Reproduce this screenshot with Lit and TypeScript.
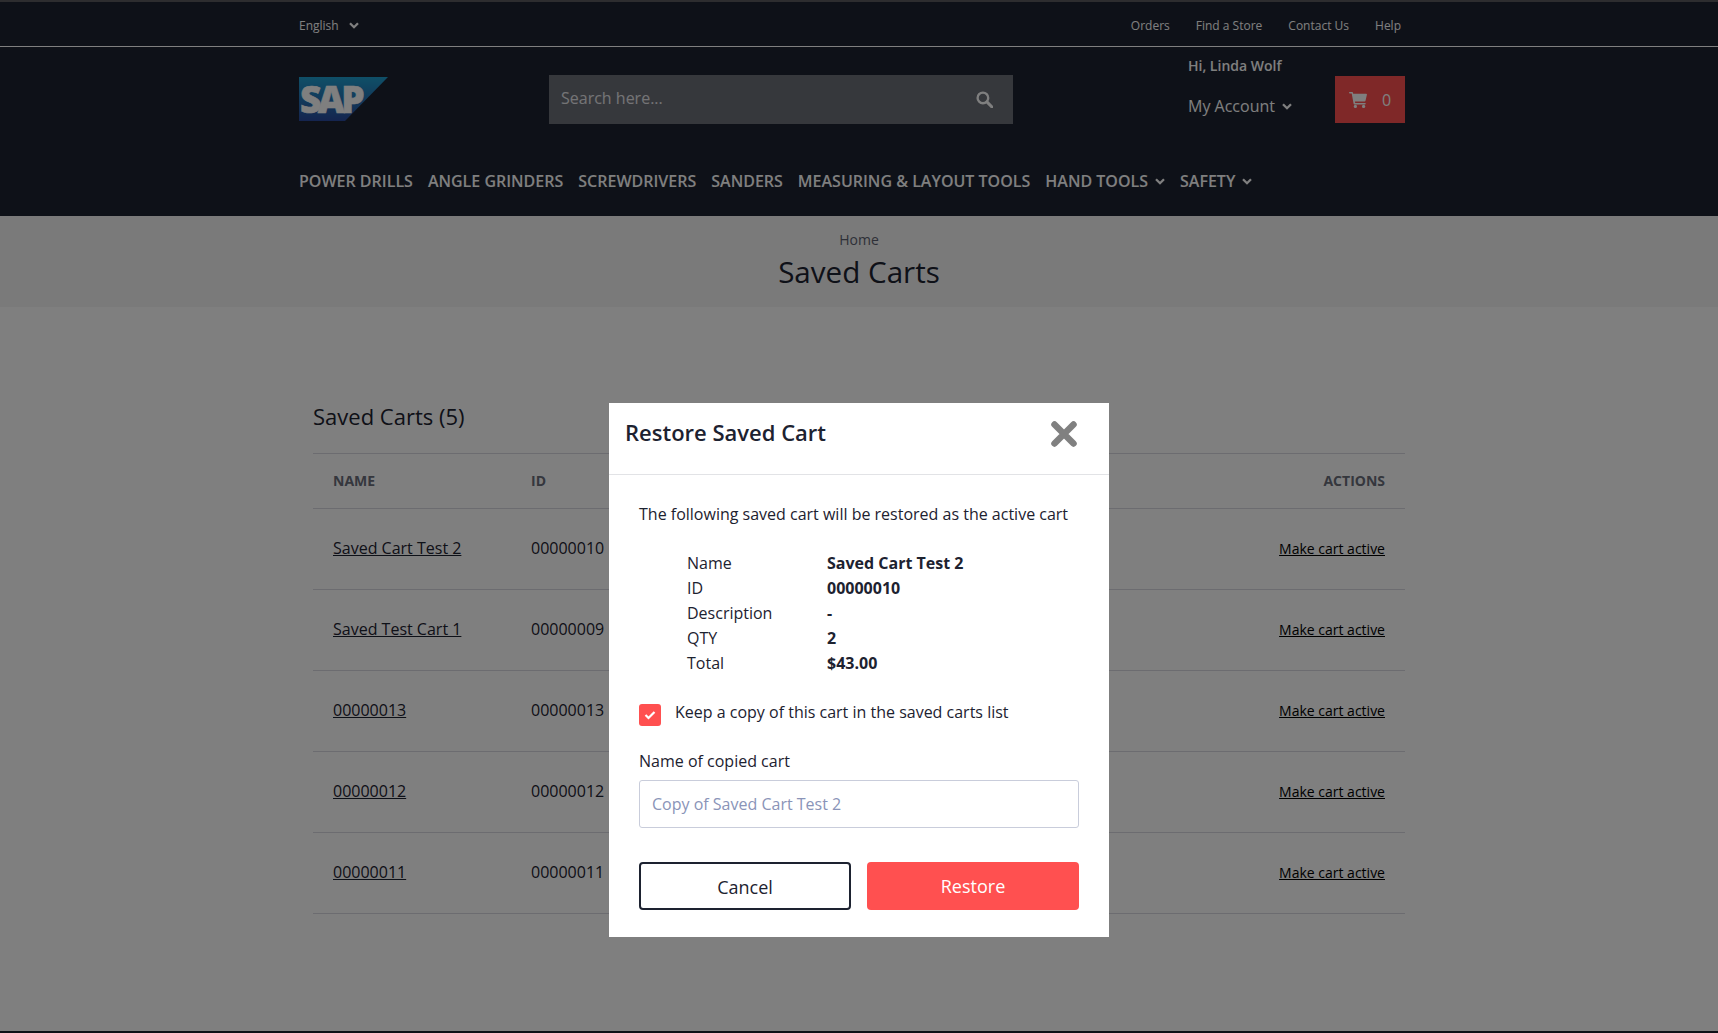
import { LitElement, html, css } from "lit";
import { customElement } from "lit/decorators.js";

const chevron = html`<svg class="chev" viewBox="0 0 10 7" aria-hidden="true"><path d="M1 1.2 5 5.2l4-4" fill="none" stroke="currentColor" stroke-width="2.3"/></svg>`;

const rows = [
  ["Saved Cart Test 2", "00000010"],
  ["Saved Test Cart 1", "00000009"],
  ["00000013", "00000013"],
  ["00000012", "00000012"],
  ["00000011", "00000011"],
];
const details = [
  ["Name", "Saved Cart Test 2"],
  ["ID", "00000010"],
  ["Description", "-"],
  ["QTY", "2"],
  ["Total", "$43.00"],
];

@customElement("app-root")
export class AppRoot extends LitElement {
  static styles = css`
    :host { display: flex; flex-direction: column; height: 1033px; overflow: hidden; position: relative; background: #fff; font-family: "Open Sans", sans-serif; color: #1d2230; }
    * { box-sizing: border-box; }
    .wrap { width: 1140px; margin: 0 auto; padding: 0 15px; }
    header { background: #1c2230; color: #fff; height: 216px; flex: none; padding-right: 10px; border-top: 2px solid #5a5a5e; }
    .top { height: 45px; margin-right: -10px; border-bottom: 1px solid #fff; padding-right: 10px; }
    .top .wrap { display: flex; justify-content: space-between; align-items: center; height: 44px; font-size: 12px; padding-top: 3px; padding-right: 23px; }
    .lang { display: flex; align-items: center; gap: 10px; }
    .links { display: flex; gap: 26px; }
    .chev { width: 10px; height: 7px; }
    .main { display: flex; height: 107px; position: relative; }
    .logo { width: 90px; height: 44px; margin-top: 30px; margin-right: 160px; flex: none; overflow: visible; }
    .search { width: 464px; height: 49px; margin-top: 28px; background: #6d7079; display: flex; align-items: center; justify-content: space-between; padding: 0 12px 3px; font-size: 16px; color: #e9e9ec; flex: none; }
    .search svg { width: 17px; height: 17px; margin: 2px 8px 0 0; }
    .acct { margin-left: 175px; width: 147px; flex: none; }
    .hi { font-size: 14px; font-weight: 600; margin-top: 9px; line-height: 20px; }
    .my { font-size: 16px; margin-top: 19px; display: flex; align-items: center; gap: 7px; line-height: 22px; }
    .cart { margin-top: 29px; width: 70px; height: 47px; background: #ff5050; display: flex; align-items: center; justify-content: center; gap: 15px; font-size: 16px; flex: none; }
    .cart svg { width: 18px; height: 16px; }
    nav { display: flex; gap: 15px; font-size: 16px; font-weight: 600; padding-top: 16px; line-height: 22px; }
    nav span { display: flex; align-items: center; gap: 7px; }
    .crumb { height: 91px; background: #f4f4f4; text-align: center; flex: none; }
    .crumb .home { font-size: 14px; padding-top: 14px; line-height: 19px; color: #5d6170; }
    .crumb h1 { font-size: 29.6px; font-weight: 400; margin: 4px 0 0; line-height: 38px; }
    .content { padding-right: 10px; flex: none; }
    .inner { margin: 0 4px 0 14px; }
    h2 { font-size: 22px; font-weight: 400; margin: 0; padding-top: 94px; line-height: 30px; height: 147px; border-bottom: 1px solid #d8d8e0; }
    .row { display: flex; align-items: center; border-bottom: 1px solid #d8d8e0; padding: 0 20px 2px; height: 81px; font-size: 16px; }
    .head { height: 55px; font-size: 14px; font-weight: 700; color: #6a6e7b; padding-bottom: 1px; }
    .name { width: 198px; flex: none; }
    .id { flex: 1; }
    .act { font-size: 14px; color: #000; text-decoration: underline; }
    .name a { text-decoration: underline; }
    .head .act { text-decoration: none; color: #6a6e7b; }
    .foot { margin-top: auto; height: 2px; background: #1c2230; flex: none; }
    .overlay { position: absolute; inset: 0; background: rgba(0,0,0,.5); display: flex; justify-content: center; padding-top: 403px; }
    .modal { width: 500px; height: 534px; background: #fff; }
    .mhead { height: 72px; border-bottom: 1px solid #e2e3e6; display: flex; justify-content: space-between; padding: 14px 31px 0 16px; }
    .mhead h3 { font-size: 22px; font-weight: 600; margin: 0; line-height: 30px; }
    .x { width: 28px; height: 28px; margin-top: 3px; }
    .mbody { padding: 28px 30px 0; font-size: 16px; }
    .mbody p { margin: 0; line-height: 22px; }
    .dl { display: grid; grid-template-columns: 140px 1fr; margin: 26px 0 0 48px; line-height: 25px; }
    .dl b { font-weight: 700; }
    .check { display: flex; margin-top: 25px; gap: 14px; align-items: flex-start; line-height: 22px; height: 31px; }
    .box { width: 22px; height: 22px; border-radius: 3px; background: #ff5050; display: flex; align-items: center; justify-content: center; margin-top: 3px; }
    .box svg { width: 12px; height: 10px; }
    label { display: block; margin-top: 18px; line-height: 22px; }
    .input { height: 48px; margin-top: 8px; border: 1px solid #c9cddb; border-radius: 3px; padding: 0 12px; display: flex; align-items: center; color: #8a94b8; }
    .btns { display: flex; gap: 16px; margin-top: 34px; }
    .btn { width: 212px; flex: none; height: 48px; border-radius: 4px; display: flex; align-items: center; justify-content: center; font-size: 18px; }
    .cancel { border: 2px solid #1d2230; padding-top: 2px; }
    .restore { background: #ff5050; color: #fff; font-weight: 500; }
  `;

  render() {
    return html`
      <header>
        <div class="top"><div class="wrap">
          <div class="lang">English ${chevron}</div>
          <div class="links"><span>Orders</span><span>Find a Store</span><span>Contact Us</span><span>Help</span></div>
        </div></div>
        <div class="wrap">
          <div class="main">
            <svg class="logo" viewBox="0 0 90 44" aria-label="SAP logo">
              <defs><linearGradient id="g" x1="0" y1="0" x2="0" y2="1"><stop offset="0" stop-color="#1f9fcf"/><stop offset="1" stop-color="#2a4a9e"/></linearGradient></defs>
              <polygon points="0,0 89,0 46,44 0,44" fill="url(#g)"/>
              <text x="1" y="35.5" font-family="Open Sans" font-weight="800" font-size="37" letter-spacing="-3.5" fill="#fff" stroke="#fff" stroke-width=".6">SAP</text>
            </svg>
            <div class="search">Search here...
              <svg viewBox="0 0 16 16"><circle cx="6.5" cy="6.5" r="5" fill="none" stroke="#fff" stroke-width="2.2"/><path d="M10.5 10.5 15 15" stroke="#fff" stroke-width="2.8" stroke-linecap="round"/></svg>
            </div>
            <div class="acct">
              <div class="hi">Hi, Linda Wolf</div>
              <div class="my">My Account ${chevron}</div>
            </div>
            <div class="cart">
              <svg viewBox="0 0 18 16"><path fill="#fff" d="M0 .6C0 .3.3 0 .6 0h2.6c.4 0 .7.3.8.7l.2 1.1h13c.5 0 .9.5.7 1l-1.400 6c-.1.4-.4.6-.8.6H5.900l.3 1.500h9.900c.4 0 .7.3.7.7s-.3.8-.7.8H5.400c-.4 0-.7-.3-.8-.7L2.700 1.500H.6C.3 1.500 0 1 0 .6z"/><circle cx="6.4" cy="14.4" r="1.6" fill="#fff"/><circle cx="14.6" cy="14.4" r="1.6" fill="#fff"/></svg>
              0
            </div>
          </div>
          <nav>
            <span>POWER DRILLS</span><span>ANGLE GRINDERS</span><span>SCREWDRIVERS</span><span>SANDERS</span><span>MEASURING &amp; LAYOUT TOOLS</span>
            <span>HAND TOOLS ${chevron}</span><span>SAFETY ${chevron}</span>
          </nav>
        </div>
      </header>
      <div class="crumb"><div class="home">Home</div><h1>Saved Carts</h1></div>
      <div class="content"><div class="wrap"><div class="inner">
        <h2>Saved Carts (5)</h2>
        <div class="row head"><div class="name">NAME</div><div class="id">ID</div><div class="act">ACTIONS</div></div>
        ${rows.map(r => html`<div class="row"><div class="name"><a>${r[0]}</a></div><div class="id">${r[1]}</div><div class="act">Make cart active</div></div>`)}
      </div></div></div>
      <div class="foot"></div>
      <div class="overlay">
        <div class="modal">
          <div class="mhead"><h3>Restore Saved Cart</h3>
            <svg class="x" viewBox="0 0 28 28"><path d="M4.5 4.5l19 19M23.500 4.500l-19 19" stroke="#808080" stroke-width="6.500" stroke-linecap="round"/></svg>
          </div>
          <div class="mbody">
            <p>The following saved cart will be restored as the active cart</p>
            <div class="dl">${details.map(d => html`<span>${d[0]}</span><b>${d[1]}</b>`)}</div>
            <div class="check"><div class="box"><svg viewBox="0 0 12 10"><path d="M1.5 5 4.500 8 10.500 2" fill="none" stroke="#fff" stroke-width="2.200"/></svg></div>Keep a copy of this cart in the saved carts list</div>
            <label>Name of copied cart</label>
            <div class="input">Copy of Saved Cart Test 2</div>
            <div class="btns"><div class="btn cancel">Cancel</div><div class="btn restore">Restore</div></div>
          </div>
        </div>
      </div>
    `;
  }
}
